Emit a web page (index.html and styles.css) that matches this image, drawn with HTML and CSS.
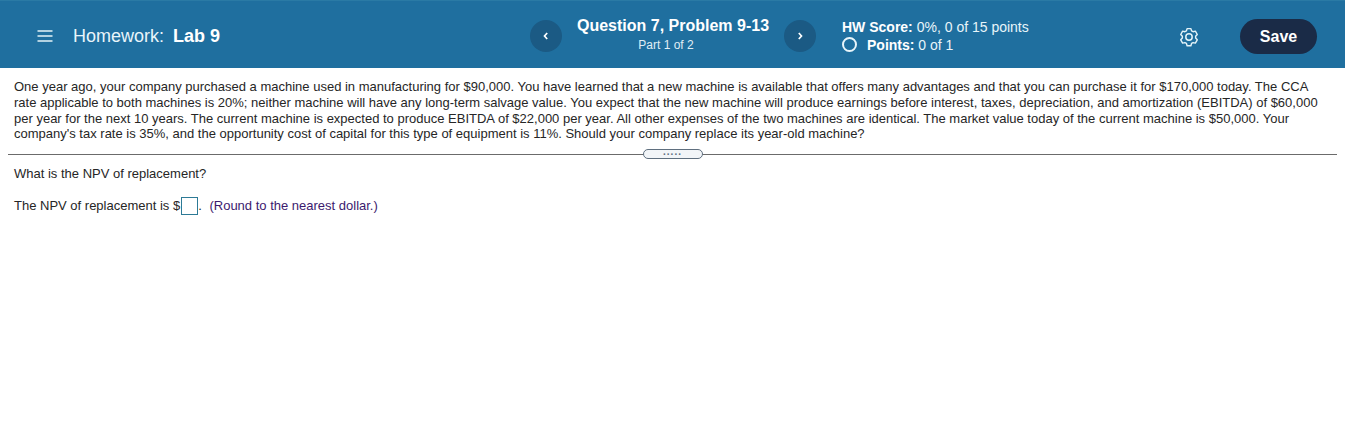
FILE: index.html
```html
<!DOCTYPE html>
<html lang="en">
<head>
    <meta charset="UTF-8">
    <title>Homework: Lab 9</title>
    <link rel="stylesheet" href="styles.css">
</head>
<body>
    <header class="top-bar">
        <div class="title-area">
            <svg class="menu-icon" width="16" height="14" viewBox="0 0 16 14">
                <path d="M0.500 2h15M0.500 7h15M0.500 12h15" stroke="#e4f3f8" stroke-width="1.6" fill="none"/>
            </svg>
            <span class="hw-title">Homework:</span>
            <b class="hw-name">Lab 9</b>
        </div>
        <div class="question-nav">
            <button class="nav-btn">
                <svg width="8" height="10" viewBox="0 0 8 10"><path d="M5.2 2 L2.5 5 L5.2 8" stroke="#fff" stroke-width="1.7" fill="none"/></svg>
            </button>
            <div class="question-info">
                <div class="question-title">Question 7, Problem 9-13</div>
                <div class="question-part">Part 1 of 2</div>
            </div>
            <button class="nav-btn">
                <svg width="8" height="10" viewBox="0 0 8 10"><path d="M2.8 2 L5.5 5 L2.8 8" stroke="#fff" stroke-width="1.7" fill="none"/></svg>
            </button>
        </div>
        <div class="score-area">
            <div><b>HW Score:</b> 0%, 0 of 15 points</div>
            <div class="points-row">
                <span class="points-ring"></span>
                <span><b>Points:</b> 0 of 1</span>
            </div>
        </div>
        <div class="action-area">
            <svg class="gear-icon" width="20" height="20" viewBox="0 0 20 20">
                <path d="M8 1.8h4l.7 2.4 1.6.9 2.4-.6 2 3.5-1.7 1.9v1.8l1.7 1.9-2 3.5-2.4-.6-1.6.9-.7 2.4H8l-.7-2.4-1.6-.9-2.4.6-2-3.5 1.7-1.9V9.900L1.300 8l2-3.500 2.400.6 1.600-.9z" transform="translate(0.500 -0.100) scale(0.950)" stroke="#e4f3f8" stroke-width="1.500" stroke-linejoin="round" fill="none"/>
                <circle cx="10" cy="10" r="3.200" stroke="#e4f3f8" stroke-width="1.500" fill="none"/>
            </svg>
            <button class="save-btn">Save</button>
        </div>
    </header>

    <main class="content">
        <p class="problem-text">One year ago, your company purchased a machine used in manufacturing for $90,000. You have learned that a new machine is available that offers many advantages and that you can purchase it for $170,000 today. The CCA rate applicable to both machines is 20%; neither machine will have any long-term salvage value. You expect that the new machine will produce earnings before interest, taxes, depreciation, and amortization (EBITDA) of $60,000 per year for the next 10 years. The current machine is expected to produce EBITDA of $22,000 per year. All other expenses of the two machines are identical. The market value today of the current machine is $50,000. Your company's tax rate is 35%, and the opportunity cost of capital for this type of equipment is 11%. Should your company replace its year-old machine?</p>
        <div class="divider">
            <span class="divider-handle">.....</span>
        </div>
        <p class="question-text">What is the NPV of replacement?</p>
        <p class="answer-row">The NPV of replacement is $<span class="answer-box"></span>. <span class="hint">(Round to the nearest dollar.)</span></p>
    </main>
</body>
</html>
```

FILE: styles.css
```css
* {
    margin: 0;
    padding: 0;
    box-sizing: border-box;
}

body {
    font-family: "Liberation Sans", Arial, sans-serif;
    font-size: 13px;
    color: #262626;
    background-color: white;
}

/* top bar */
.top-bar {
    display: flex;
    align-items: center;
    height: 68px;
    padding-top: 2px;
    background-color: #1f6f9f;
    border-top: 1px solid #2a7aa5;
    color: white;
}

.title-area {
    display: flex;
    align-items: center;
    width: 530px;
    padding-left: 37px;
    font-size: 18px;
    color: #e8f5fa;
}

.menu-icon {
    margin-right: 20px;
}

.hw-title,
.hw-name {
    margin-top: 2px;
}

.hw-name {
    margin-left: 9px;
    color: white;
}

.question-nav {
    display: flex;
    align-items: center;
    width: 286px;
    margin-right: 25px;
}

.nav-btn {
    display: flex;
    justify-content: center;
    align-items: center;
    width: 32px;
    height: 32px;
    border: none;
    border-radius: 50%;
    background-color: #1b5a84;
}

.question-info {
    flex: 1;
    margin-top: -2px;
    text-align: center;
}

.question-title {
    font-size: 16px;
    font-weight: bold;
    line-height: 20px;
}

.question-part {
    padding-right: 14px;
    font-size: 12px;
    line-height: 18px;
    color: #e0eef5;
}

.score-area {
    width: 338px;
    padding-left: 1px;
    font-size: 14px;
    line-height: 18px;
    color: #e8f5fa;
}

.score-area b {
    color: white;
}

.points-row {
    display: flex;
    align-items: center;
}

.points-ring {
    width: 15px;
    height: 15px;
    margin-right: 10px;
    border: 2px solid #e8f5fa;
    border-radius: 50%;
}

.action-area {
    display: flex;
    align-items: center;
    margin-top: 2px;
}

.gear-icon {
    margin-right: 41px;
}

.save-btn {
    width: 77px;
    height: 35px;
    border: none;
    border-radius: 18px;
    background-color: #1a2b47;
    color: white;
    font-family: inherit;
    font-size: 16px;
    font-weight: bold;
}

/* question content */
.content {
    padding: 11px 8px 0;
}

.problem-text {
    padding: 0 6px;
    line-height: 15.8px;
}

.divider {
    display: flex;
    justify-content: center;
    height: 1px;
    margin-top: 12px;
    background-color: #6b6b6b;
    overflow: visible;
}

.divider-handle {
    width: 60px;
    height: 10px;
    margin-top: -5px;
    border: 1px solid #5f6f7f;
    border-radius: 5px;
    background-color: #f2f5f8;
    color: #5f6f7f;
    font-size: 10px;
    font-weight: bold;
    line-height: 3px;
    text-align: center;
    letter-spacing: 1px;
}

.question-text {
    margin-top: 11px;
    padding: 0 6px;
    line-height: 16px;
}

.answer-row {
    display: flex;
    align-items: center;
    margin-top: 15px;
    padding: 0 6px;
    line-height: 18px;
    white-space: pre;
}

.answer-box {
    width: 17px;
    height: 18px;
    margin-left: 1px;
    border: 1px solid #2d7a96;
}

.hint {
    margin-left: 4px;
    color: #3c1a6e;
}
```
